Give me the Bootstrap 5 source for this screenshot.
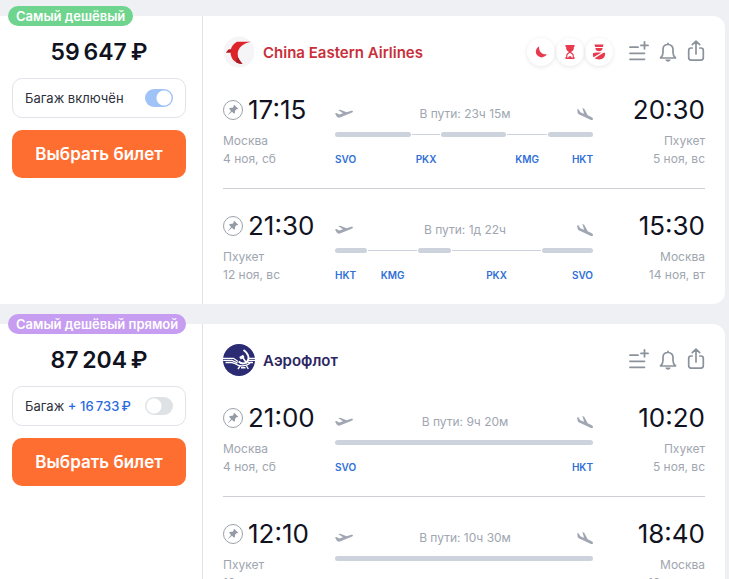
<!DOCTYPE html>
<html lang="ru">
<head>
<meta charset="utf-8">
<meta name="viewport" content="width=device-width, initial-scale=1">
<title>Авиабилеты Москва — Пхукет</title>
<link href="https://cdn.jsdelivr.net/npm/bootstrap@5.3.0/dist/css/bootstrap.min.css" rel="stylesheet">
<style>
  body { background: #eef0f4; font-family: Inter, Roboto, sans-serif; font-size: 13px; line-height: 18px; color: #10131f; padding: 16px 4px 20px 0; }
  ::-webkit-scrollbar { display: none; }
  .tickets { gap: 20px; }
  .ticket { background: #fff; border-radius: 0 12px 12px 0; }
  .offer { width: 203px; padding: 20px 16px 20px 12px; border-right: 1px solid #e1e3e8; }
  .tag { top: -10px; left: 8px; height: 20px; padding: 0 8px; border-radius: 10px; font-weight: 600; line-height: 20px; color: #fff; white-space: nowrap; }
  .tag-cheap { background: #6fd48d; }
  .tag-direct { background: #c69df0; }
  .price { font-size: 23px; line-height: 32px; font-weight: 600; margin-bottom: 10px; }
  .baggage { height: 40px; padding: 0 12px; border: 1px solid #e1e3e8; border-radius: 10px; margin-bottom: 12px; color: #2c303b; }
  .baggage .extra { color: #2a6ae0; font-weight: 500; }
  .baggage .form-check-input { width: 28px; height: 18px; margin: 0; border: 0; background-color: #dfe2e5; cursor: pointer;
    background-image: radial-gradient(circle at 9px 9px, #fff 7px, transparent 8px); background-position: left center; background-size: 28px 18px; border-radius: 9px; }
  .baggage .form-check-input:checked { background-color: #9fc2f7; background-image: radial-gradient(circle at 19px 9px, #fff 7px, transparent 8px); }
  .btn-buy { --bs-btn-bg: #ff6e31; --bs-btn-color: #fff; --bs-btn-hover-bg: #f2602a; --bs-btn-hover-color: #fff; --bs-btn-active-bg: #e65622; --bs-btn-active-color: #fff;
    height: 48px; padding: 2px 0 0; border: 0; border-radius: 10px; font-size: 17px; font-weight: 600; }
  .carrier { padding: 20px 20px 5px; }
  .carrier-name { font-size: 15px; line-height: 20px; font-weight: 600; padding-top: 2px; margin-left: 8px; }
  .name-ce { color: #c92f3a; }
  .name-su { color: #2b2562; }
  .notes { gap: 1px; margin-right: 14px; }
  .note { width: 28px; height: 28px; border-radius: 50%; box-shadow: 0 1px 4px rgba(40, 50, 70, .12); }
  .actions { gap: 10px; }
  .actions .btn { border: 0; color: #8c929c; }
  .leg { margin: 0 20px; padding: 22px 0 20px; }
  .leg + .leg { border-top: 1px solid #cdd1d6; }
  .point { width: 112px; }
  .clock { font-size: 26px; line-height: 30px; margin-bottom: 7px; }
  .pin { margin-right: 5px; }
  .muted, .travel { color: #a0a6b0; font-size: 12px; }
  .travel { height: 18px; margin: 10px 0 9px; }
  .track { height: 5px; margin-bottom: 13px; }
  .fly { background: #cdd3dd; border-radius: 3px; height: 5px; }
  .wait { background: #cdd3dd; height: 1px; margin: 0 1px; }
  .track > *, .codes > * { flex-basis: 0; min-width: 0; }
  .codes { font-size: 10px; font-weight: 600; color: #2f6fd8; }
</style>
</head>
<body>
<svg width="0" height="0" class="position-absolute" aria-hidden="true">
  <symbol id="i-pin" viewBox="0 0 20 20"><circle cx="10" cy="10" r="9.5" fill="none" stroke="#9ba1ac"/><path fill="#959ba6" d="M11.2 4.8 15.2 8.7 14.4 9.3 13.4 9.3 12 10.8C12.3 12.1 12 13 11.1 13.8L9 11.7 5.2 14.9 5 14.7 8.1 10.9 6 8.8C7 7.9 8 7.7 9.1 8L10.7 6.6 10.6 5.5Z"/></symbol>
  <symbol id="i-up" viewBox="0 0 18 10"><path fill="#a0a7b2" d="M0 4.4 1.5 4 4.3 5.4 8 4.3 3.2 1.1 5.2.7 11.6 3.2 15.5 2C17.1 1.6 18.2 2 17.9 2.8 17.6 3.5 16.8 3.8 16 4.1L5.5 8.3C3.8 8.9 2.6 8.7 1.8 7.5Z"/></symbol>
  <symbol id="i-down" viewBox="0 0 16 13"><path fill="#a0a7b2" d="M.3 1 1.7 1.4 3.3 4.3 7.1 5.8 5.4 0 7.2.8 10.7 7.2 14.3 9.1C15.7 9.8 16.3 10.8 15.9 11.6 15.5 12.3 14.5 12.2 13.5 11.8L3.3 7.1C1.5 6.2.6 5.3.5 4Z"/></symbol>
  <symbol id="i-list" viewBox="0 0 22 24"><path fill="none" stroke="currentColor" stroke-width="1.8" stroke-linecap="round" d="M3 7.2H11M3 13.3H17.5M3 19.3H17.5M17.5 2V8.8M14 5.4H21"/></symbol>
  <symbol id="i-bell" viewBox="0 0 18 24"><path fill="none" stroke="currentColor" stroke-width="1.7" stroke-linecap="round" stroke-linejoin="round" d="M1.5 18H16.5C14.4 16.3 14 15.3 14 12.5V9.5C14 6.4 12 4.5 9 4.5S4 6.4 4 9.5V12.5C4 15.3 3.6 16.3 1.5 18ZM9 4.5V3.3"/><path fill="currentColor" d="M6.3 19.6H11.7C11.3 22.4 6.7 22.4 6.3 19.6Z"/></symbol>
  <symbol id="i-share" viewBox="0 0 18 24"><path fill="none" stroke="currentColor" stroke-width="1.7" stroke-linecap="round" stroke-linejoin="round" d="M5.2 8H4Q1.7 8 1.7 10.5V17.5Q1.7 20.1 4 20.1H14Q16.3 20.1 16.3 17.5V10.5Q16.3 8 14 8H12.8M9 14V1.3M5.3 4.7 9 1.1 12.7 4.7"/></symbol>
</svg>

<main class="tickets d-flex flex-column">

  <article class="ticket d-flex position-relative">
    <span class="tag tag-cheap position-absolute">Самый дешёвый</span>
    <div class="offer flex-shrink-0">
      <div class="price text-center">59&#8201;647&#8201;₽</div>
      <div class="baggage d-flex align-items-center justify-content-between">
        <label for="bag1">Багаж включён</label>
        <input class="form-check-input" type="checkbox" role="switch" id="bag1" checked>
      </div>
      <button type="button" class="btn btn-buy w-100">Выбрать билет</button>
    </div>
    <div class="flex-grow-1">
      <header class="carrier d-flex align-items-center">
        <svg width="32" height="32" viewBox="0 0 32 32" aria-hidden="true"><circle cx="16" cy="16" r="15.5" fill="#f5f5f8"/><path fill="#dc2429" d="M14 5.7H28C19.5 7.5 15 12 14.7 17.5 14.6 22 16.5 25.5 19.5 28 12.5 27.8 8 23.5 7.5 16.5H3L5.5 13.5H7.7C8.6 10.2 10.8 7.5 14 5.7Z"/><path fill="#a81c24" d="M3 16.5 6 13.5H7.8L7.5 16.5ZM14.6 21 19.5 28C17 27.9 14.8 27.3 13 26.3Z"/></svg>
        <span class="carrier-name name-ce">China Eastern Airlines</span>
        <div class="notes d-flex ms-auto">
          <span class="note d-flex align-items-center justify-content-center"><svg width="12" height="12" viewBox="0 0 12 12" role="img" aria-label="Ночной перелёт"><path fill="#e8394e" d="M4.2.3A5.8 5.8 0 1 0 11.8 8.2C7.5 9.1 3.3 5.3 4.2.3Z"/></svg></span>
          <span class="note d-flex align-items-center justify-content-center"><svg width="10" height="14" viewBox="0 0 10 14" role="img" aria-label="Долгая пересадка"><path fill="#e8394e" d="M.5 0H9.5V2H8.8V3.5C8.8 5 7.6 6.2 6 7 7.6 7.8 8.8 9 8.8 10.5V12H9.5V14H.5V12H1.2V10.5C1.2 9 2.4 7.8 4 7 2.4 6.2 1.2 5 1.2 3.5V2H.5Z"/><path fill="#fff" d="M5 8C6.5 8.8 7.7 9.6 7.7 11V12.8H6.8C6.6 11.6 5.7 11.2 5 11.2S3.4 11.6 3.2 12.8H2.3V11C2.3 9.6 3.5 8.8 5 8Z"/></svg></span>
          <span class="note d-flex align-items-center justify-content-center"><svg width="14" height="16" viewBox="0 0 14 16" role="img" aria-label="Нужна виза"><path fill="#e8394e" d="M2.5.5H11.5L10.8 3H3.2ZM3.4 4H10.6C10.6 8.3 3.4 8.3 3.4 4ZM1 9.2 4 8.4H9.5L1.5 13.2C.9 12.2.8 10.6 1 9.2ZM13 8.8C13.7 13 10.8 15.5 7 15.5 5.2 15.5 3.8 15 2.7 14.3L11.5 8.8Z"/></svg></span>
        </div>
        <div class="actions d-flex">
          <button type="button" class="btn p-0 d-flex" aria-label="В избранное"><svg width="22" height="24"><use href="#i-list"/></svg></button>
          <button type="button" class="btn p-0 d-flex" aria-label="Следить за ценой"><svg width="18" height="24"><use href="#i-bell"/></svg></button>
          <button type="button" class="btn p-0 d-flex" aria-label="Поделиться"><svg width="18" height="24"><use href="#i-share"/></svg></button>
        </div>
      </header>

      <section class="leg d-flex">
        <div class="point">
          <div class="clock d-flex align-items-center"><svg class="pin" width="20" height="20" aria-hidden="true"><use href="#i-pin"/></svg>17:15</div>
          <div class="muted">Москва<br>4 ноя, сб</div>
        </div>
        <div class="flex-grow-1">
          <div class="travel d-flex align-items-center justify-content-between"><svg width="18" height="10" aria-hidden="true"><use href="#i-up"/></svg><span>В пути: 23ч 15м</span><svg width="16" height="13" aria-hidden="true"><use href="#i-down"/></svg></div>
          <div class="track d-flex align-items-center"><span class="fly" style="flex-grow:76"></span><span class="wait" style="flex-grow:28"></span><span class="fly" style="flex-grow:65"></span><span class="wait" style="flex-grow:40"></span><span class="fly" style="flex-grow:45"></span></div>
          <div class="codes d-flex"><span style="flex-grow:76">SVO</span><span class="text-center" style="flex-grow:30">PKX</span><span style="flex-grow:65"></span><span class="text-center" style="flex-grow:42">KMG</span><span class="text-end" style="flex-grow:45">HKT</span></div>
        </div>
        <div class="point text-end">
          <div class="clock">20:30</div>
          <div class="muted">Пхукет<br>5 ноя, вс</div>
        </div>
      </section>

      <section class="leg d-flex">
        <div class="point">
          <div class="clock d-flex align-items-center"><svg class="pin" width="20" height="20" aria-hidden="true"><use href="#i-pin"/></svg>21:30</div>
          <div class="muted">Пхукет<br>12 ноя, вс</div>
        </div>
        <div class="flex-grow-1">
          <div class="travel d-flex align-items-center justify-content-between"><svg width="18" height="10" aria-hidden="true"><use href="#i-up"/></svg><span>В пути: 1д 22ч</span><svg width="16" height="13" aria-hidden="true"><use href="#i-down"/></svg></div>
          <div class="track d-flex align-items-center"><span class="fly" style="flex-grow:32"></span><span class="wait" style="flex-grow:49"></span><span class="fly" style="flex-grow:33"></span><span class="wait" style="flex-grow:89"></span><span class="fly" style="flex-grow:51"></span></div>
          <div class="codes d-flex"><span style="flex-grow:32">HKT</span><span class="text-center" style="flex-grow:51">KMG</span><span style="flex-grow:33"></span><span class="text-center" style="flex-grow:91">PKX</span><span class="text-end" style="flex-grow:51">SVO</span></div>
        </div>
        <div class="point text-end">
          <div class="clock">15:30</div>
          <div class="muted">Москва<br>14 ноя, вт</div>
        </div>
      </section>
    </div>
  </article>

  <article class="ticket d-flex position-relative">
    <span class="tag tag-direct position-absolute">Самый дешёвый прямой</span>
    <div class="offer flex-shrink-0">
      <div class="price text-center">87&#8201;204&#8201;₽</div>
      <div class="baggage d-flex align-items-center justify-content-between">
        <label for="bag2">Багаж <span class="extra">+ 16&#8201;733&#8201;₽</span></label>
        <input class="form-check-input" type="checkbox" role="switch" id="bag2">
      </div>
      <button type="button" class="btn btn-buy w-100">Выбрать билет</button>
    </div>
    <div class="flex-grow-1">
      <header class="carrier d-flex align-items-center">
        <svg width="32" height="32" viewBox="0 0 32 32" aria-hidden="true"><circle cx="16" cy="16" r="16" fill="#2a2b72"/><g fill="none" stroke="#fff"><path stroke-width="1.3" d="M0 14.3H10.5L15 17.5M.2 16.4H9L14.5 19M2.5 18.5H8.5L14 20.3M32 14.3H26M32 16.4H25.5M30 18.5H24.5"/><path stroke-width="1.8" d="M20.5 6C26 9.5 27 15.5 23.5 18.3 21 20 17.8 19.6 15.7 17.5"/><path stroke-width="1.5" d="M19 12.5 23.8 19.5"/><path stroke-width="3" d="M17 14.3 20.8 12"/><path stroke-width="1.4" d="M13 20.3C16 22.6 23 22.6 27 19.3M17 22 15 25M23.5 22 25.3 25M18 23.8H22.5"/></g></svg>
        <span class="carrier-name name-su">Аэрофлот</span>
        <div class="actions d-flex ms-auto">
          <button type="button" class="btn p-0 d-flex" aria-label="В избранное"><svg width="22" height="24"><use href="#i-list"/></svg></button>
          <button type="button" class="btn p-0 d-flex" aria-label="Следить за ценой"><svg width="18" height="24"><use href="#i-bell"/></svg></button>
          <button type="button" class="btn p-0 d-flex" aria-label="Поделиться"><svg width="18" height="24"><use href="#i-share"/></svg></button>
        </div>
      </header>

      <section class="leg d-flex">
        <div class="point">
          <div class="clock d-flex align-items-center"><svg class="pin" width="20" height="20" aria-hidden="true"><use href="#i-pin"/></svg>21:00</div>
          <div class="muted">Москва<br>4 ноя, сб</div>
        </div>
        <div class="flex-grow-1">
          <div class="travel d-flex align-items-center justify-content-between"><svg width="18" height="10" aria-hidden="true"><use href="#i-up"/></svg><span>В пути: 9ч 20м</span><svg width="16" height="13" aria-hidden="true"><use href="#i-down"/></svg></div>
          <div class="track d-flex"><span class="fly flex-grow-1"></span></div>
          <div class="codes d-flex justify-content-between"><span class="flex-grow-1">SVO</span><span class="flex-grow-1 text-end">HKT</span></div>
        </div>
        <div class="point text-end">
          <div class="clock">10:20</div>
          <div class="muted">Пхукет<br>5 ноя, вс</div>
        </div>
      </section>

      <section class="leg d-flex">
        <div class="point">
          <div class="clock d-flex align-items-center"><svg class="pin" width="20" height="20" aria-hidden="true"><use href="#i-pin"/></svg>12:10</div>
          <div class="muted">Пхукет<br>12 ноя, вс</div>
        </div>
        <div class="flex-grow-1">
          <div class="travel d-flex align-items-center justify-content-between"><svg width="18" height="10" aria-hidden="true"><use href="#i-up"/></svg><span>В пути: 10ч 30м</span><svg width="16" height="13" aria-hidden="true"><use href="#i-down"/></svg></div>
          <div class="track d-flex"><span class="fly flex-grow-1"></span></div>
          <div class="codes d-flex justify-content-between"><span class="flex-grow-1">HKT</span><span class="flex-grow-1 text-end">SVO</span></div>
        </div>
        <div class="point text-end">
          <div class="clock">18:40</div>
          <div class="muted">Москва<br>12 ноя, вс</div>
        </div>
      </section>
    </div>
  </article>

</main>
<script src="https://cdn.jsdelivr.net/npm/bootstrap@5.3.0/dist/js/bootstrap.bundle.min.js"></script>
</body>
</html>
